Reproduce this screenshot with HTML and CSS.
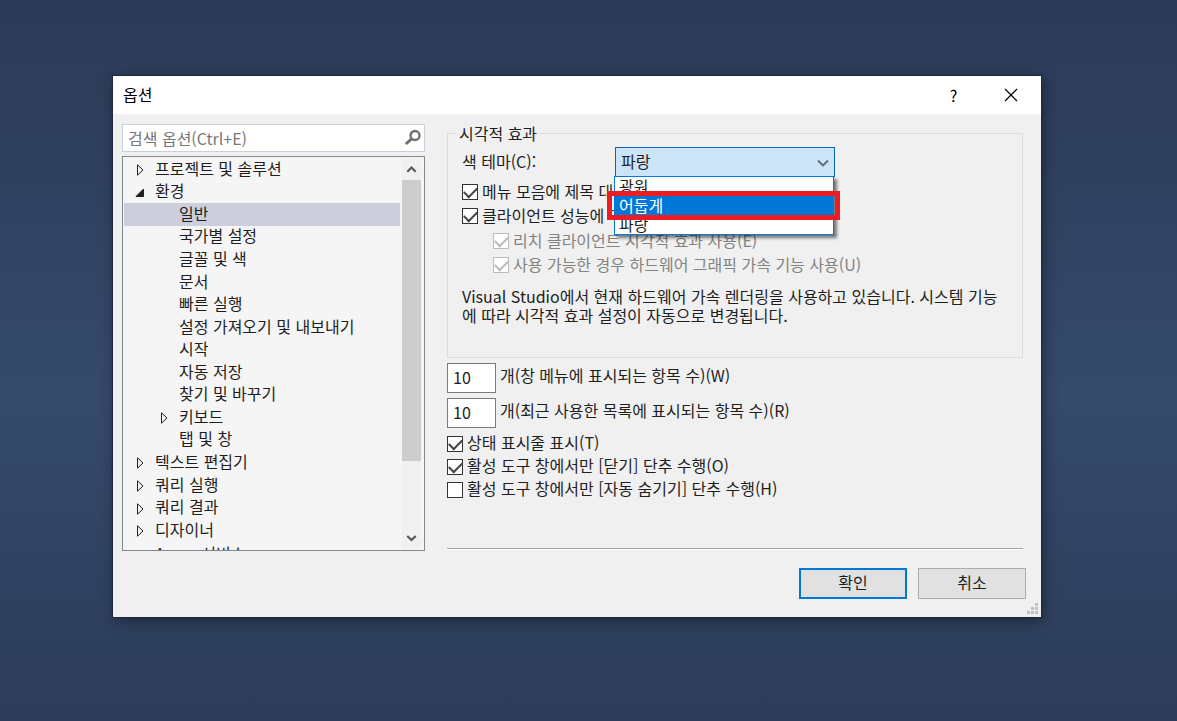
FILE: index.html
```html
<!DOCTYPE html>
<html lang="ko">
<head>
<meta charset="utf-8">
<meta name="viewport" content="width=device-width, initial-scale=1">
<title>옵션</title>
<link rel="stylesheet" href="styles.css">
</head>
<body>
<main class="dialog" role="dialog" aria-labelledby="dialog-title">
  <header class="titlebar">
    <h1 class="title" id="dialog-title">옵션</h1>
    <button class="title-button" type="button" aria-label="도움말">?</button>
    <button class="title-button" type="button" aria-label="닫기">
      <svg width="14" height="14" viewBox="0 0 14 14"><path d="M1 1l12 12M13 1L1 13" fill="none" stroke="#000" stroke-width="1.2"/></svg>
    </button>
  </header>

  <div class="content">
    <section class="sidebar">
      <div class="search">
        <input class="search-input" type="text" placeholder="검색 옵션(Ctrl+E)" aria-label="검색 옵션">
        <svg class="search-icon" width="18" height="18" viewBox="0 0 18 18"><circle cx="11" cy="6.500" r="4.500" fill="none" stroke="#717171" stroke-width="2.400"/><path d="M7.600 9.800L1.800 15" stroke="#717171" stroke-width="3"/></svg>
      </div>
      <div class="tree">
        <ul class="tree-list">
          <li class="node"><svg class="arrow" viewBox="0 0 12 12"><path d="M3.500 .8v10.400L9 6z"/></svg>프로젝트 및 솔루션</li>
          <li class="node"><svg class="arrow open" viewBox="0 0 12 12"><path d="M9.500 2v7.500H2z"/></svg>환경</li>
          <li class="node child selected">일반</li>
          <li class="node child">국가별 설정</li>
          <li class="node child">글꼴 및 색</li>
          <li class="node child">문서</li>
          <li class="node child">빠른 실행</li>
          <li class="node child">설정 가져오기 및 내보내기</li>
          <li class="node child">시작</li>
          <li class="node child">자동 저장</li>
          <li class="node child">찾기 및 바꾸기</li>
          <li class="node branch"><svg class="arrow" viewBox="0 0 12 12"><path d="M3.500 .8v10.400L9 6z"/></svg>키보드</li>
          <li class="node child">탭 및 창</li>
          <li class="node"><svg class="arrow" viewBox="0 0 12 12"><path d="M3.500 .8v10.400L9 6z"/></svg>텍스트 편집기</li>
          <li class="node"><svg class="arrow" viewBox="0 0 12 12"><path d="M3.500 .8v10.400L9 6z"/></svg>쿼리 실행</li>
          <li class="node"><svg class="arrow" viewBox="0 0 12 12"><path d="M3.500 .8v10.400L9 6z"/></svg>쿼리 결과</li>
          <li class="node"><svg class="arrow" viewBox="0 0 12 12"><path d="M3.500 .8v10.400L9 6z"/></svg>디자이너</li>
          <li class="node leaf">Azure 서비스</li>
        </ul>
        <div class="scrollbar">
          <svg class="scroll-arrow" viewBox="0 0 18 18"><path d="M5 11.500L9 7.500l4 4"/></svg>
          <div class="thumb"></div>
          <svg class="scroll-arrow down" viewBox="0 0 18 18"><path d="M5 7l4 4 4-4"/></svg>
        </div>
      </div>
    </section>

    <section class="settings">
      <fieldset class="group">
        <legend class="legend">시각적 효과</legend>
        <div class="theme-row">
          <label class="theme-label" for="theme">색 테마(C):</label>
          <div class="combo">
            <select class="combo-select" id="theme"><option>파랑</option><option>광원</option><option>어둡게</option></select>
            <svg class="combo-arrow" width="12" height="8" viewBox="0 0 12 8"><path d="M1 1.500l5 5 5-5" fill="none" stroke="#5d6a78" stroke-width="1.800"/></svg>
            <ul class="menu">
              <li class="menu-item">광원</li>
              <li class="menu-item active">어둡게</li>
              <li class="menu-item">파랑</li>
            </ul>
            <div class="callout"></div>
          </div>
        </div>
        <div class="checks effects">
          <label class="check"><input class="box" type="checkbox" checked>메뉴 모음에 제목 대</label>
          <label class="check"><input class="box" type="checkbox" checked>클라이언트 성능에 따</label>
        </div>
        <div class="checks effects nested">
          <label class="check off"><input class="box" type="checkbox" checked disabled>리치 클라이언트 시각적 효과 사용(E)</label>
          <label class="check off"><input class="box" type="checkbox" checked disabled>사용 가능한 경우 하드웨어 그래픽 가속 기능 사용(U)</label>
        </div>
        <p class="note">Visual Studio에서 현재 하드웨어 가속 렌더링을 사용하고 있습니다. 시스템 기능<br>에 따라 시각적 효과 설정이 자동으로 변경됩니다.</p>
      </fieldset>
      <div class="numbers">
        <div class="number-row"><input class="number" id="window-items" type="text" value="10"><label class="number-label" for="window-items">개(창 메뉴에 표시되는 항목 수)(W)</label></div>
        <div class="number-row"><input class="number" id="recent-items" type="text" value="10"><label class="number-label" for="recent-items">개(최근 사용한 목록에 표시되는 항목 수)(R)</label></div>
      </div>
      <div class="checks">
        <label class="check"><input class="box" type="checkbox" checked>상태 표시줄 표시(T)</label>
        <label class="check"><input class="box" type="checkbox" checked>활성 도구 창에서만 [닫기] 단추 수행(O)</label>
        <label class="check"><input class="box" type="checkbox">활성 도구 창에서만 [자동 숨기기] 단추 수행(H)</label>
      </div>
      <hr class="rule">
    </section>
  </div>

  <footer class="footer">
    <button class="button primary" type="button">확인</button>
    <button class="button" type="button">취소</button>
  </footer>
  <svg class="grip" width="12" height="12" viewBox="0 0 12 12"><path d="M8 0h3v3H8zM4 4h3v3H4zM8 4h3v3H8zM0 8h3v3H0zM4 8h3v3H4zM8 8h3v3H8z" fill="#bfbfbf"/></svg>
</main>
</body>
</html>
```
FILE: styles.css
```css
* {
  box-sizing: border-box;
}

body {
  margin: 0;
  min-height: 100vh;
  padding: 76px 136px 104px 113px;
  background: linear-gradient(#2b3a56, #354a6c 55%, #2c3c59);
  color: #1e1e1e;
  font: 16px/19px "Noto Sans CJK KR", sans-serif;
}

button,
input,
select {
  font: inherit;
  color: inherit;
}

ul {
  margin: 0;
  padding: 0;
  list-style: none;
}

.dialog {
  position: relative;
  background: #f0f0f0;
  box-shadow: 0 0 1px 1px #1f2a3e, 2px 4px 14px rgba(0, 0, 0, 0.4);
}

.titlebar {
  display: flex;
  align-items: center;
  height: 38px;
  padding: 0 2px 0 10px;
  background: #fff;
  color: #000;
}

.title {
  flex: 1;
  margin: 0;
  padding-bottom: 2px;
  font-size: 16px;
  font-weight: 400;
}

.title-button {
  display: flex;
  align-items: center;
  justify-content: center;
  width: 57px;
  height: 38px;
  padding: 0;
  border: 0;
  background: none;
}

.content {
  display: grid;
  grid-template-columns: 303px 1fr;
  gap: 22px;
  padding: 10px 18px 0 9px;
}

.search {
  display: flex;
  align-items: center;
  height: 28px;
  margin-bottom: 4px;
  padding: 0 2px 0 5px;
  border: 1px solid #cccedb;
  background: #fff;
}

.search-input {
  flex: 1;
  min-width: 0;
  padding: 0;
  border: 0;
  outline: 0;
  background: none;
}

.search-input::placeholder {
  color: #777;
  opacity: 1;
}

.tree {
  display: flex;
  height: 395px;
  padding: 1px 3px 1px 1px;
  border: 1px solid #828790;
  background: #f5f5f5;
  overflow: hidden;
}

.tree-list {
  flex: 1;
  display: grid;
  grid-template-rows: repeat(18, 1fr);
  height: 406px;
}

.node {
  display: flex;
  align-items: center;
  gap: 9px;
  padding: 0 0 2px 10px;
}

.child {
  padding-left: 55px;
}

.branch {
  padding-left: 34px;
}

.leaf {
  padding: 2px 0 0 31px;
}

.selected {
  background: #cccedb;
}

.arrow {
  width: 12px;
  height: 12px;
  margin-top: 4px;
  fill: none;
  stroke: #1e1e1e;
}

.open {
  fill: #1e1e1e;
}

.scrollbar {
  display: flex;
  flex-direction: column;
  width: 19px;
  margin-left: 2px;
  background: #f0f0f0;
}

.scroll-arrow {
  width: 19px;
  height: 22px;
  fill: none;
  stroke: #555;
  stroke-width: 2;
}

.thumb {
  height: 281px;
  background: #cdcdcd;
}

.down {
  margin-top: auto;
}

.settings {
  display: flex;
  flex-direction: column;
}

.group {
  min-width: 0;
  margin: 0;
  padding: 5px 14px 32px;
  border: 1px solid #dcdcdc;
}

.legend {
  margin-left: -6px;
  padding: 0 3px;
  line-height: 18px;
}

.theme-row {
  display: flex;
  align-items: center;
}

.theme-label {
  width: 153px;
  padding-bottom: 2px;
}

.combo {
  position: relative;
  width: 220px;
}

.combo-select {
  display: block;
  width: 100%;
  height: 30px;
  padding: 0 5px 2px;
  border: 1px solid #0a64ad;
  border-radius: 0;
  background: #cce4f7;
  appearance: none;
}

.combo-arrow {
  position: absolute;
  top: 12px;
  right: 6px;
}

.menu {
  position: absolute;
  z-index: 1;
  top: 29px;
  left: -1px;
  width: 220px;
  border: 1px solid #0078d7;
  background: #fff;
  box-shadow: 3px 3px 3px rgba(0, 0, 0, 0.5);
}

.menu-item {
  height: 19px;
  padding-left: 4px;
}

.active {
  background: #0078d7;
  color: #fff;
}

.callout {
  position: absolute;
  z-index: 2;
  top: 44px;
  left: -8px;
  width: 233px;
  height: 29px;
  border: 5px solid #ed1c24;
}

.checks {
  display: grid;
  grid-auto-rows: 23px;
  justify-items: start;
  margin-top: 4px;
}

.effects {
  grid-auto-rows: 24px;
  margin-top: 3px;
}

.nested {
  margin-top: 1px;
  padding-left: 31px;
}

.check {
  display: flex;
  align-items: center;
  gap: 4px;
  padding-bottom: 2px;
  white-space: nowrap;
}

.box {
  width: 16px;
  height: 16px;
  margin: 2px 0 0;
  border: 1px solid #333;
  background: #fff;
  appearance: none;
}

.box:checked::before {
  content: "";
  display: block;
  width: 11px;
  height: 6px;
  margin: 2px 0 0 1px;
  border: solid #444;
  border-width: 0 0 2px 2px;
  transform: rotate(-45deg);
}

.off {
  color: #838383;
}

.off .box,
.off .box::before {
  border-color: #bcbcbc;
}

.note {
  margin: 10px 0 0;
  white-space: nowrap;
}

.numbers {
  display: grid;
  gap: 5px;
  margin-top: 5px;
}

.number-row {
  display: flex;
  align-items: center;
  gap: 4px;
}

.number {
  width: 49px;
  height: 30px;
  padding: 0 5px 2px;
  border: 1px solid #7a7a7a;
  background: #fff;
}

.number-label {
  padding-bottom: 5px;
}

.rule {
  width: 100%;
  margin: auto 0 1px;
  border: 0;
  border-top: 1px solid #a0a0a0;
  border-bottom: 1px solid #fff;
}

.footer {
  display: flex;
  justify-content: flex-end;
  gap: 11px;
  padding: 17px 15px 18px;
}

.button {
  width: 108px;
  height: 31px;
  padding: 0 0 2px;
  border: 1px solid #adadad;
  background: #e1e1e1;
}

.primary {
  border: 2px solid #0078d7;
}

.grip {
  position: absolute;
  right: 2px;
  bottom: 2px;
}
```
